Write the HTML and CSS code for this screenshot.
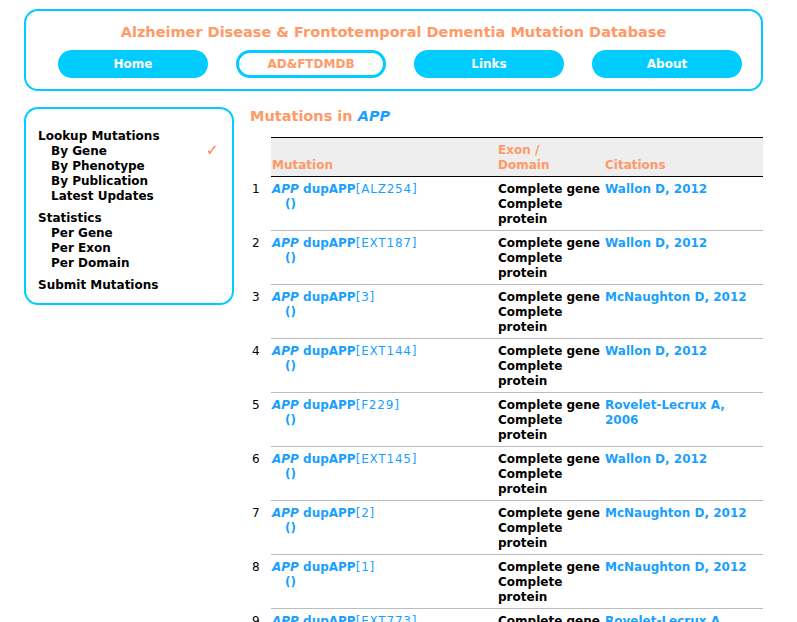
FILE: index.html
```html
<!DOCTYPE html>
<html>
<head>
<meta charset="utf-8">
<link rel="stylesheet" href="styles.css">
</head>
<body>
<div class="page">
  <header class="masthead">
    <h1 class="title">Alzheimer Disease &amp; Frontotemporal Dementia Mutation Database</h1>
    <nav class="nav">
      <a class="btn">Home</a>
      <a class="btn btn-current">AD&amp;FTDMDB</a>
      <a class="btn">Links</a>
      <a class="btn">About</a>
    </nav>
  </header>
  <div class="body">
    <aside class="sidebar">
      <div class="group">
        <div class="head">Lookup Mutations</div>
        <div class="sub sub-active">By Gene <span class="check">✓</span></div>
        <div class="sub">By Phenotype</div>
        <div class="sub">By Publication</div>
        <div class="sub">Latest Updates</div>
      </div>
      <div class="group">
        <div class="head">Statistics</div>
        <div class="sub">Per Gene</div>
        <div class="sub">Per Exon</div>
        <div class="sub">Per Domain</div>
      </div>
      <div class="group">
        <div class="head">Submit Mutations</div>
      </div>
    </aside>
    <main class="main">
      <h2 class="heading">Mutations in <i class="gene">APP</i></h2>
      <div class="table">
        <div class="thead">
          <div class="num"></div>
          <div class="c-mut th">Mutation</div>
          <div class="c-exon th">Exon /<br>Domain</div>
          <div class="c-cit th">Citations</div>
        </div>
        <div class="row"><div class="num">1</div><div class="c-mut"><a class="mut"><i>APP</i> dupAPP<span class="id">[ALZ254]</span></a><div class="paren">()</div></div><div class="c-exon">Complete gene Complete protein</div><div class="c-cit"><a class="cite">Wallon D, 2012</a></div></div>
        <div class="row"><div class="num">2</div><div class="c-mut"><a class="mut"><i>APP</i> dupAPP<span class="id">[EXT187]</span></a><div class="paren">()</div></div><div class="c-exon">Complete gene Complete protein</div><div class="c-cit"><a class="cite">Wallon D, 2012</a></div></div>
        <div class="row"><div class="num">3</div><div class="c-mut"><a class="mut"><i>APP</i> dupAPP<span class="id">[3]</span></a><div class="paren">()</div></div><div class="c-exon">Complete gene Complete protein</div><div class="c-cit"><a class="cite">McNaughton D, 2012</a></div></div>
        <div class="row"><div class="num">4</div><div class="c-mut"><a class="mut"><i>APP</i> dupAPP<span class="id">[EXT144]</span></a><div class="paren">()</div></div><div class="c-exon">Complete gene Complete protein</div><div class="c-cit"><a class="cite">Wallon D, 2012</a></div></div>
        <div class="row"><div class="num">5</div><div class="c-mut"><a class="mut"><i>APP</i> dupAPP<span class="id">[F229]</span></a><div class="paren">()</div></div><div class="c-exon">Complete gene Complete protein</div><div class="c-cit"><a class="cite">Rovelet-Lecrux A, 2006</a></div></div>
        <div class="row"><div class="num">6</div><div class="c-mut"><a class="mut"><i>APP</i> dupAPP<span class="id">[EXT145]</span></a><div class="paren">()</div></div><div class="c-exon">Complete gene Complete protein</div><div class="c-cit"><a class="cite">Wallon D, 2012</a></div></div>
        <div class="row"><div class="num">7</div><div class="c-mut"><a class="mut"><i>APP</i> dupAPP<span class="id">[2]</span></a><div class="paren">()</div></div><div class="c-exon">Complete gene Complete protein</div><div class="c-cit"><a class="cite">McNaughton D, 2012</a></div></div>
        <div class="row"><div class="num">8</div><div class="c-mut"><a class="mut"><i>APP</i> dupAPP<span class="id">[1]</span></a><div class="paren">()</div></div><div class="c-exon">Complete gene Complete protein</div><div class="c-cit"><a class="cite">McNaughton D, 2012</a></div></div>
        <div class="row"><div class="num">9</div><div class="c-mut"><a class="mut"><i>APP</i> dupAPP<span class="id">[EXT773]</span></a><div class="paren">()</div></div><div class="c-exon">Complete gene Complete protein</div><div class="c-cit"><a class="cite">Rovelet-Lecrux A, 2006</a></div></div>
      </div>
    </main>
  </div>
</div>
</body>
</html>
```
FILE: styles.css
```css
html, body { margin: 0; padding: 0; background: #fff; }
body {
  font-family: "DejaVu Sans", Verdana, sans-serif;
  font-size: 12px;
  line-height: 15px;
  color: #000;
}
.page { width: 739px; padding: 9px 0 0 24px; }
.masthead {
  border: 2px solid #00ccff;
  border-radius: 14px;
  height: 78px;
  box-sizing: content-box;
}
.title {
  margin: 0;
  padding-top: 11px;
  text-align: center;
  color: #ff9966;
  font-size: 14.5px;
  line-height: 20px;
  font-weight: bold;
}
.nav {
  display: flex;
  gap: 28px;
  padding: 8px 0 0 32px;
}
.btn {
  box-sizing: border-box;
  width: 150px;
  height: 28px;
  border-radius: 14px;
  background: #00ccff;
  color: #fff;
  font-weight: bold;
  font-size: 12px;
  display: flex;
  align-items: center;
  justify-content: center;
  padding-top: 1px;
}
.btn-current {
  background: #fff;
  border: 3px solid #00ccff;
  color: #ff9966;
}
.body { display: flex; gap: 16px; margin-top: 16px; }
.sidebar {
  width: 210px;
  flex: none;
  border: 2px solid #00ccff;
  border-radius: 14px;
  padding: 20px 0 0 12px;
  box-sizing: border-box;
  height: 198px;
  font-weight: bold;
}
.group { margin-bottom: 7px; }
.sub { padding-left: 13px; position: relative; }
.check {
  position: absolute;
  left: 168px;
  top: -1px;
  color: #ff7744;
  font-weight: normal;
  font-size: 15px;
}
.main { flex: 1; }
.heading {
  margin: 0;
  color: #ff9966;
  font-size: 14.5px;
  line-height: 18px;
  font-weight: bold;
}
.gene { color: #1a9fff; }
.table { margin-top: 12px; }
.thead, .row { display: flex; }
.num { width: 21px; flex: none; padding: 5px 0 0 2px; box-sizing: border-box; }
.thead .c-mut, .thead .c-exon, .thead .c-cit {
  background: #eeeeee;
  border-top: 1px solid #000;
  border-bottom: 1px solid #000;
  height: 40px;
  box-sizing: border-box;
  display: flex;
  align-items: flex-end;
  padding-bottom: 3px;
}
.th { color: #ff9966; font-weight: bold; }
.c-mut { width: 227px; flex: none; padding-left: 1px; box-sizing: border-box; }
.c-exon { width: 107px; flex: none; font-weight: bold; }
.c-cit { width: 158px; flex: none; padding-right: 12px; box-sizing: border-box; }
.row .c-mut, .row .c-exon, .row .c-cit {
  border-bottom: 1px solid #bbbbbb;
  padding-top: 5px;
  padding-bottom: 3px;
  height: 54px;
  box-sizing: border-box;
}
.mut, .cite, .paren { color: #1a9fff; font-weight: bold; }
.mut i { font-weight: bold; }
.id { font-weight: normal; letter-spacing: 0.8px; }
.paren { padding-left: 13px; }
```
